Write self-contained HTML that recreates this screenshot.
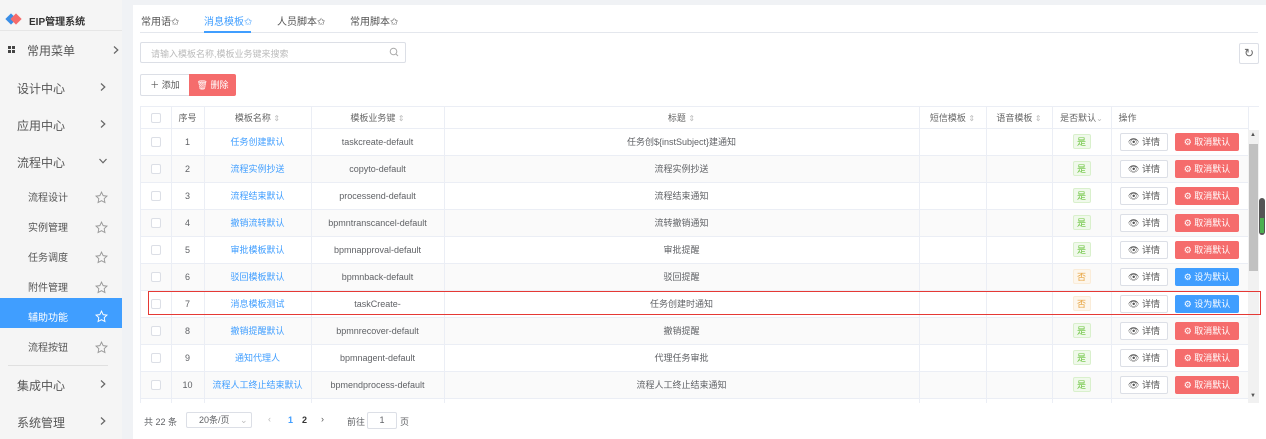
<!DOCTYPE html>
<html><head><meta charset="utf-8">
<style>
*{box-sizing:border-box;margin:0;padding:0}
body{width:1266px;height:439px;overflow:hidden;background:#f0f2f5;font-family:"Liberation Sans","Noto Sans CJK SC",sans-serif;font-size:9px;color:#606266;position:relative}
.abs{position:absolute}
#side{left:0;top:0;width:122px;height:439px;background:#f5f5f5}
.mi{position:absolute;left:17px;font-size:12px;color:#555}
.arr{position:absolute;left:98px;width:10px;height:10px}
.sub{position:absolute;left:28px;font-size:10px;color:#555}
.star{position:absolute;left:95px;width:13px;height:13px}
#main{left:133px;top:5px;width:1133px;height:434px;background:#fff}
.tab{position:absolute;top:13px;font-size:10px;color:#555}
table{border-collapse:collapse;table-layout:fixed}
td,th{border-right:1px solid #ebeef5;border-bottom:1px solid #ebeef5;text-align:center;font-weight:normal;white-space:nowrap;overflow:hidden;font-size:9px;color:#606266}
th{height:21px;color:#666}
tr.r td{height:27px}
tr.r:nth-child(odd) td{background:#fafafa}
.cb{display:inline-block;width:10px;height:10px;border:1px solid #dcdfe6;background:#fff;border-radius:2px;vertical-align:middle}
.lk{color:#409eff}
.yes{display:inline-block;width:18px;height:15px;line-height:14px;border:1px solid #d9f0cc;background:#f0f9eb;color:#67c23a;border-radius:2px}
.no{display:inline-block;width:18px;height:15px;line-height:14px;border:1px solid #faecd8;background:#fdf6ec;color:#e6a23c;border-radius:2px}
.det{display:inline-block;width:48px;height:18px;line-height:16px;border:1px solid #dcdfe6;border-radius:2px;background:#fff;color:#555;margin-right:7px;vertical-align:middle}
.cx{display:inline-block;width:64px;height:18px;line-height:18px;border-radius:2px;background:#f56c6c;color:#fff;vertical-align:middle}
.sx{display:inline-block;width:64px;height:18px;line-height:18px;border-radius:2px;background:#409eff;color:#fff;vertical-align:middle}
.srt{color:#bbb;font-size:8px}
</style></head><body>
<svg width="0" height="0" style="position:absolute">
<defs>
<symbol id="st" viewBox="0 0 14 14"><path d="M7 1.2l1.8 3.8 4.1.5-3 2.8.8 4.1L7 10.4 3.3 12.4l.8-4.1-3-2.8 4.1-.5z" fill="none" stroke="currentColor" stroke-width="1"/></symbol>
<symbol id="ch" viewBox="0 0 10 10"><path d="M3 1.5L6.8 5 3 8.5" fill="none" stroke="currentColor" stroke-width="1.2"/></symbol>
<symbol id="cd" viewBox="0 0 10 10"><path d="M1.5 3L5 6.8 8.5 3" fill="none" stroke="currentColor" stroke-width="1.2"/></symbol>
</defs></svg>
<div class="abs" style="left:0;top:0;width:1266px;height:5px;background:#f0f2f5"></div>
<div id="side" class="abs">
 <div class="abs" style="left:7px;top:15px;width:8px;height:8px;background:#3a8ee6;transform:rotate(45deg)"></div>
 <div class="abs" style="left:12px;top:15px;width:8px;height:8px;background:#f56c6c;transform:rotate(45deg)"></div>
 <div class="abs" style="left:29px;top:13px;font-size:10px;font-weight:bold;color:#333">EIP管理系统</div>
 <div class="abs" style="left:0;top:30px;width:122px;height:1px;background:#e6e6e6"></div>
 <div class="abs" style="left:8px;top:46px;width:3px;height:3px;background:#444;box-shadow:4px 0 #444,0 4px #444,4px 4px #444"></div>
 <div class="mi" style="left:27px;top:42px">常用菜单</div><svg class="arr" style="left:111px;top:45px;color:#666"><use href="#ch"/></svg>
 <div class="mi" style="top:80px">设计中心</div><svg class="arr" style="top:82px;color:#666"><use href="#ch"/></svg>
 <div class="mi" style="top:117px">应用中心</div><svg class="arr" style="top:119px;color:#666"><use href="#ch"/></svg>
 <div class="mi" style="top:154px">流程中心</div><svg class="arr" style="top:156px;color:#666"><use href="#cd"/></svg>
 <div class="sub" style="top:189px">流程设计</div><svg class="star" style="top:191px;color:#999"><use href="#st"/></svg>
 <div class="sub" style="top:219px">实例管理</div><svg class="star" style="top:221px;color:#999"><use href="#st"/></svg>
 <div class="sub" style="top:249px">任务调度</div><svg class="star" style="top:251px;color:#999"><use href="#st"/></svg>
 <div class="sub" style="top:279px">附件管理</div><svg class="star" style="top:281px;color:#999"><use href="#st"/></svg>
 <div class="abs" style="left:0;top:298px;width:122px;height:30px;background:#409eff"></div>
 <div class="sub" style="top:309px;color:#fff">辅助功能</div><svg class="star" style="top:310px;color:#fff"><use href="#st"/></svg>
 <div class="sub" style="top:339px">流程按钮</div><svg class="star" style="top:341px;color:#999"><use href="#st"/></svg>
 <div class="abs" style="left:8px;top:365px;width:100px;height:1px;background:#e0e0e0"></div>
 <div class="mi" style="top:377px">集成中心</div><svg class="arr" style="top:379px;color:#666"><use href="#ch"/></svg>
 <div class="mi" style="top:414px">系统管理</div><svg class="arr" style="top:416px;color:#666"><use href="#ch"/></svg>
</div>
<div id="main" class="abs"></div>
<div class="tab" style="left:141px">常用语✩</div>
<div class="tab" style="left:204px;color:#409eff">消息模板✩</div>
<div class="tab" style="left:277px">人员脚本✩</div>
<div class="tab" style="left:350px">常用脚本✩</div>
<div class="abs" style="left:140px;top:32px;width:1118px;height:1px;background:#e4e7ed"></div>
<div class="abs" style="left:204px;top:31px;width:47px;height:2px;background:#409eff"></div>
<div class="abs" style="left:140px;top:42px;width:266px;height:21px;border:1px solid #dcdfe6;border-radius:2px;background:#fff"></div>
<div class="abs" style="left:151px;top:47px;color:#bbb;font-size:9px">请输入模板名称,模板业务键来搜索</div>
<svg class="abs" style="left:389px;top:47px" width="10" height="10" viewBox="0 0 10 10"><circle cx="4.5" cy="4.5" r="3.3" fill="none" stroke="#aaa"/><path d="M7 7l2 2" stroke="#aaa"/></svg>
<div class="abs" style="left:1239px;top:43px;width:20px;height:21px;border:1px solid #dcdfe6;border-radius:2px;text-align:center;line-height:19px;font-size:12px;color:#666">↻</div>
<div class="abs" style="left:140px;top:74px;width:50px;height:22px;border:1px solid #dcdfe6;border-radius:2px 0 0 2px;line-height:20px;text-align:center;color:#555">＋ 添加</div>
<div class="abs" style="left:189px;top:74px;width:47px;height:22px;background:#f56c6c;border-radius:0 2px 2px 0;line-height:22px;text-align:center;color:#fff">🗑 删除</div>

<div class="abs" style="left:140px;top:106px;width:1119px;height:297px;overflow:hidden;border-top:1px solid #ebeef5;border-left:1px solid #ebeef5">
<table style="width:1107px">
<colgroup><col style="width:30px"><col style="width:33px"><col style="width:107px"><col style="width:133px"><col style="width:475px"><col style="width:67px"><col style="width:66px"><col style="width:59px"><col style="width:137px"></colgroup>
<tr><th><span class="cb"></span></th><th>序号</th><th>模板名称 <span class="srt">⇕</span></th><th>模板业务键 <span class="srt">⇕</span></th><th>标题 <span class="srt">⇕</span></th><th>短信模板 <span class="srt">⇕</span></th><th>语音模板 <span class="srt">⇕</span></th><th>是否默认<span class="srt">⌄</span></th><th style="text-align:left;padding-left:7px">操作</th></tr>
<tr class="r"><td style="height:25px"><span class="cb"></span></td><td>1</td><td class="lk">任务创建默认</td><td>taskcreate-default</td><td>任务创${instSubject}建通知</td><td></td><td></td><td><span class="yes">是</span></td><td><span class="det">👁 详情</span><span class="cx">⚙ 取消默认</span></td></tr>
<tr class="r"><td><span class="cb"></span></td><td>2</td><td class="lk">流程实例抄送</td><td>copyto-default</td><td>流程实例抄送</td><td></td><td></td><td><span class="yes">是</span></td><td><span class="det">👁 详情</span><span class="cx">⚙ 取消默认</span></td></tr>
<tr class="r"><td><span class="cb"></span></td><td>3</td><td class="lk">流程结束默认</td><td>processend-default</td><td>流程结束通知</td><td></td><td></td><td><span class="yes">是</span></td><td><span class="det">👁 详情</span><span class="cx">⚙ 取消默认</span></td></tr>
<tr class="r"><td><span class="cb"></span></td><td>4</td><td class="lk">撤销流转默认</td><td>bpmntranscancel-default</td><td>流转撤销通知</td><td></td><td></td><td><span class="yes">是</span></td><td><span class="det">👁 详情</span><span class="cx">⚙ 取消默认</span></td></tr>
<tr class="r"><td><span class="cb"></span></td><td>5</td><td class="lk">审批模板默认</td><td>bpmnapproval-default</td><td>审批提醒</td><td></td><td></td><td><span class="yes">是</span></td><td><span class="det">👁 详情</span><span class="cx">⚙ 取消默认</span></td></tr>
<tr class="r"><td><span class="cb"></span></td><td>6</td><td class="lk">驳回模板默认</td><td>bpmnback-default</td><td>驳回提醒</td><td></td><td></td><td><span class="no">否</span></td><td><span class="det">👁 详情</span><span class="sx">⚙ 设为默认</span></td></tr>
<tr class="r"><td><span class="cb"></span></td><td>7</td><td class="lk">消息模板测试</td><td>taskCreate-</td><td>任务创建时通知</td><td></td><td></td><td><span class="no">否</span></td><td><span class="det">👁 详情</span><span class="sx">⚙ 设为默认</span></td></tr>
<tr class="r"><td><span class="cb"></span></td><td>8</td><td class="lk">撤销提醒默认</td><td>bpmnrecover-default</td><td>撤销提醒</td><td></td><td></td><td><span class="yes">是</span></td><td><span class="det">👁 详情</span><span class="cx">⚙ 取消默认</span></td></tr>
<tr class="r"><td><span class="cb"></span></td><td>9</td><td class="lk">通知代理人</td><td>bpmnagent-default</td><td>代理任务审批</td><td></td><td></td><td><span class="yes">是</span></td><td><span class="det">👁 详情</span><span class="cx">⚙ 取消默认</span></td></tr>
<tr class="r"><td><span class="cb"></span></td><td>10</td><td class="lk">流程人工终止结束默认</td><td>bpmendprocess-default</td><td>流程人工终止结束通知</td><td></td><td></td><td><span class="yes">是</span></td><td><span class="det">👁 详情</span><span class="cx">⚙ 取消默认</span></td></tr>
<tr class="r"><td></td><td></td><td></td><td></td><td></td><td></td><td></td><td></td><td><span class="det"></span><span class="cx"></span></td></tr>
</table>
<div class="abs" style="left:1107px;top:23px;width:11px;height:274px;background:#f1f1f1"></div>
<div class="abs" style="left:1109px;top:25px;font-size:6px;color:#555">▲</div>
<div class="abs" style="left:1109px;top:286px;font-size:6px;color:#555">▼</div>
<div class="abs" style="left:1108px;top:37px;width:9px;height:127px;background:#c1c1c1"></div>
</div>
<div class="abs" style="left:1259px;top:198px;width:6px;height:37px;background:#555;border-radius:3px"></div>
<div class="abs" style="left:1260px;top:218px;width:4px;height:15px;background:#4caf50"></div>
<div class="abs" style="left:148px;top:291px;width:1113px;height:24px;border:1.5px solid #e53935"></div>

<div class="abs" style="left:144px;top:415px;color:#606266">共 22 条</div>
<div class="abs" style="left:186px;top:412px;width:66px;height:16px;border:1px solid #dcdfe6;border-radius:2px;padding-left:12px;line-height:14px">20条/页 <span style="color:#bbb;margin-left:8px">⌄</span></div>
<div class="abs" style="left:268px;top:414px;color:#bbb">‹</div>
<div class="abs" style="left:288px;top:415px;color:#409eff;font-weight:bold">1</div>
<div class="abs" style="left:302px;top:415px;color:#333;font-weight:bold">2</div>
<div class="abs" style="left:321px;top:414px;color:#555">›</div>
<div class="abs" style="left:347px;top:415px">前往</div>
<div class="abs" style="left:367px;top:412px;width:30px;height:17px;border:1px solid #dcdfe6;border-radius:2px;text-align:center;line-height:15px">1</div>
<div class="abs" style="left:400px;top:415px">页</div>
</body></html>
